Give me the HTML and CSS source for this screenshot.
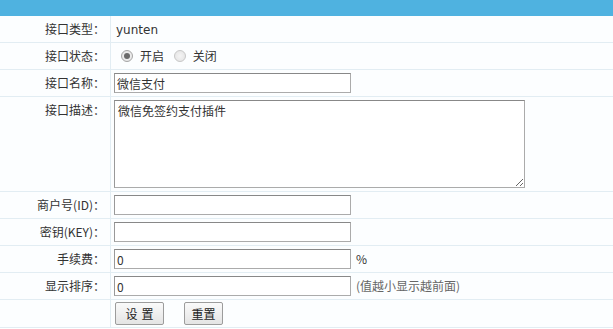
FILE: index.html
```html
<!DOCTYPE html>
<html lang="zh-CN">
<head>
<meta charset="utf-8">
<title>接口设置</title>
<link rel="stylesheet" href="styles.css">
</head>
<body>
<div class="topbar"></div>
<table class="form">
  <tr class="row">
    <td class="lbl">接口类型：</td>
    <td class="val"><span class="plain">yunten</span></td>
  </tr>
  <tr class="row">
    <td class="lbl">接口状态：</td>
    <td class="val">
      <span class="radio on"></span><span class="rtext">开启</span>
      <span class="radio"></span><span class="rtext">关闭</span>
    </td>
  </tr>
  <tr class="row">
    <td class="lbl">接口名称：</td>
    <td class="val"><input class="inp" type="text" value="微信支付"></td>
  </tr>
  <tr class="row tall">
    <td class="lbl top">接口描述：</td>
    <td class="val top"><textarea class="area">微信免签约支付插件</textarea></td>
  </tr>
  <tr class="row">
    <td class="lbl">商户号(ID)：</td>
    <td class="val"><input class="inp" type="text" value=""></td>
  </tr>
  <tr class="row">
    <td class="lbl">密钥(KEY)：</td>
    <td class="val"><input class="inp" type="text" value=""></td>
  </tr>
  <tr class="row">
    <td class="lbl">手续费：</td>
    <td class="val"><input class="inp" type="text" value="0"><span class="after">%</span></td>
  </tr>
  <tr class="row">
    <td class="lbl">显示排序：</td>
    <td class="val"><input class="inp" type="text" value="0"><span class="after hint">(值越小显示越前面)</span></td>
  </tr>
  <tr class="row last">
    <td class="lbl"></td>
    <td class="val"><button class="btn wide" type="button"><span class="sp">设</span>置</button><button class="btn" type="button">重置</button></td>
  </tr>
</table>
</body>
</html>
```

FILE: styles.css
```css
html, body {
  margin: 0;
  padding: 0;
  background: #fff;
}
body {
  font-family: "Noto Sans CJK SC", "Liberation Sans", sans-serif;
  font-size: 12px;
  color: #333;
}
.topbar {
  height: 16px;
  background: #4fb2e0;
}
.form {
  width: 100%;
  border-collapse: collapse;
  background: #fcfeff;
}
.row td {
  height: 26px;
  padding: 0;
  border-bottom: 1px solid #e2edf3;
  vertical-align: middle;
}
.row.tall td {
  height: 89px;
}
.row.last td {
  height: 27px;
}
.lbl {
  width: 105px;
  text-align: right;
  padding-right: 5px !important;
  border-right: 1px solid #e2edf3;
  white-space: nowrap;
  line-height: 16px;
}
.val {
  padding-left: 3px !important;
  line-height: 16px;
}
.top {
  vertical-align: top !important;
}
.lbl.top {
  padding-top: 5px !important;
}
.val.top {
  padding-top: 3px !important;
}
.plain {
  font-family: "DejaVu Sans", sans-serif;
  font-size: 12px;
  margin-left: 2px;
  color: #333;
}
.radio {
  display: inline-block;
  width: 10px;
  height: 10px;
  border: 1px solid #c8c8c8;
  border-radius: 50%;
  background: radial-gradient(circle, #f4f4f4 0, #e2e2e2 100%);
  vertical-align: -1px;
  position: relative;
  margin-left: 7px;
}
.radio.on {
  border-color: #a6a6a6;
}
.radio.on::after {
  content: "";
  position: absolute;
  left: 2px;
  top: 2px;
  width: 6px;
  height: 6px;
  border-radius: 50%;
  background: #6a6a6a;
}
.rtext {
  margin-left: 7px;
}
.inp {
  box-sizing: border-box;
  width: 237px;
  height: 20px;
  margin: 0;
  padding: 0 2px;
  border: 1px solid #ababab;
  border-top-color: #888;
  border-left-color: #999;
  background: #fff;
  font-family: "Noto Sans CJK SC", "Liberation Sans", sans-serif;
  font-size: 12px;
  color: #333;
  vertical-align: middle;
  outline: none;
}
.area {
  box-sizing: border-box;
  display: block;
  width: 411px;
  height: 88px;
  margin: 0;
  padding: 2px 3px;
  border: 1px solid #ababab;
  border-top-color: #888;
  border-left-color: #999;
  background: #fff;
  font-family: "Noto Sans CJK SC", "Liberation Sans", sans-serif;
  font-size: 12px;
  line-height: 16px;
  color: #333;
}
.after {
  margin-left: 5px;
  vertical-align: middle;
}
.hint {
  color: #666;
}
.btn {
  box-sizing: border-box;
  height: 23px;
  width: 39px;
  margin: 0 0 0 1px;
  padding: 0;
  border: 1px solid #9c9c9c;
  border-radius: 2px;
  background: linear-gradient(#fafafa, #e4e4e4);
  font-family: "Noto Sans CJK SC", sans-serif;
  font-size: 12px;
  color: #222;
  vertical-align: middle;
}
.btn.wide {
  width: 49px;
  margin-right: 19px;
}
.sp {
  margin-right: 4px;
}
```
